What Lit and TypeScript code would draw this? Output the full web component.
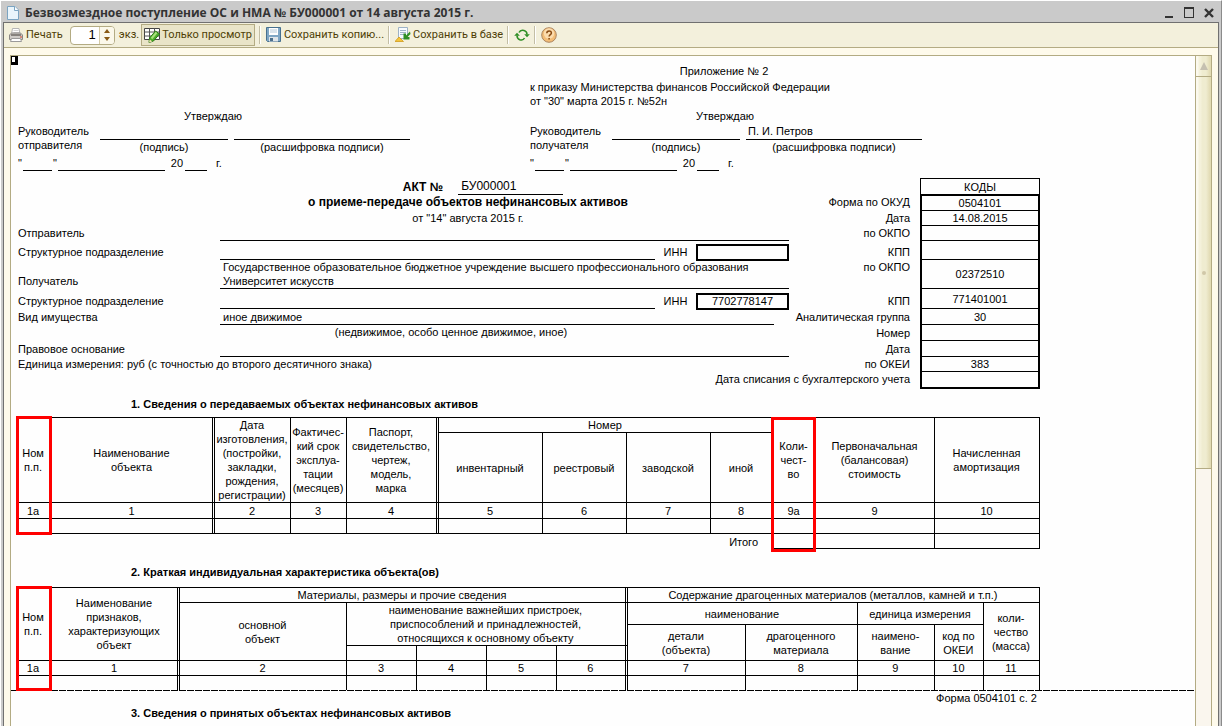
import { LitElement, html, css, svg, nothing } from "lit";
import { customElement, property } from "lit/decorators.js";
import { classMap } from "lit/directives/class-map.js";

type Cell = {
  text?: string;
  col?: number;
  row?: number;
  dbl?: boolean;
  mark?: "long" | "short" | "tall";
  bare?: boolean;
  right?: boolean;
};

const lines = (text: string) =>
  text.split("\n").map((part, i) => (i ? html`<br />${part}` : part));

const nums = (labels: string[], dbl: number[]): Cell[] =>
  labels.map((text, i) => ({ text, dbl: dbl.includes(i) }));

/* Bordered table of the printed form */
@customElement("form-table")
export class FormTable extends LitElement {
  @property({ attribute: false }) widths: number[] = [];
  @property({ attribute: false }) head: { h: number; cells: Cell[] }[] = [];
  @property({ attribute: false }) body: { h: number; cells: Cell[] }[] = [];
  @property() label = "";
  @property({ type: Boolean, reflect: true }) open = false;

  static styles = css`
    :host {
      display: block;
      margin-left: 2px;
    }
    table {
      width: 100%;
      table-layout: fixed;
      border-collapse: separate;
      border-spacing: 0;
      font-size: 11px;
      line-height: 14px;
      color: #000;
    }
    th,
    td {
      box-sizing: border-box;
      position: relative;
      padding: 0 1px 0 0;
      font-weight: normal;
      text-align: center;
      vertical-align: middle;
      white-space: nowrap;
      border: 0 solid #000;
      border-right-width: 1px;
      border-bottom-width: 1px;
    }
    .dbl {
      border-right: 3px double #000;
    }
    thead tr:first-child th {
      border-top-width: 1px;
    }
    .first {
      border-left-width: 1px;
      padding-right: 4px;
    }
    .bare {
      border-width: 0;
    }
    .right {
      text-align: right;
      padding-right: 15px;
    }
    :host([open]) tbody tr:last-child td {
      border-bottom-width: 0;
    }
    .mark {
      position: absolute;
      z-index: 1;
      top: -2px;
      left: -3px;
      right: -1px;
      height: 119px;
      box-sizing: border-box;
      border: 3px solid #f00;
      pointer-events: none;
    }
    .short {
      height: 105px;
    }
    .tall {
      top: -1px;
      left: -2px;
      height: 135px;
    }
  `;

  private cell(c: Cell, first: boolean, head: boolean) {
    const cls = classMap({
      dbl: !!c.dbl,
      bare: !!c.bare,
      right: !!c.right,
      first: first && !c.bare,
    });
    const inner = html`${lines(c.text ?? "")}${c.mark
      ? html`<span class="mark ${c.mark}"></span>`
      : nothing}`;
    return head
      ? html`<th class=${cls} colspan=${c.col ?? 1} rowspan=${c.row ?? 1}>${inner}</th>`
      : html`<td class=${cls} colspan=${c.col ?? 1}>${inner}</td>`;
  }

  render() {
    const total = this.widths.reduce((a, b) => a + b, 0);
    return html`<table aria-label=${this.label}>
      <colgroup>
        ${this.widths.map((w) => html`<col style="width:${(w / total) * 100}%" />`)}
      </colgroup>
      <thead>
        ${this.head.map(
          (r, ri) => html`<tr style="height:${r.h}px">
            ${r.cells.map((c, i) => this.cell(c, ri === 0 && i === 0, true))}
          </tr>`
        )}
      </thead>
      <tbody>
        ${this.body.map(
          (r) => html`<tr style="height:${r.h}px">
            ${r.cells.map((c, i) => this.cell(c, i === 0, false))}
          </tr>`
        )}
      </tbody>
    </table>`;
  }
}

/* Approval block with signature lines */
@customElement("approve-block")
export class ApproveBlock extends LitElement {
  @property() who = "";
  @property() name = "";

  static styles = css`
    :host {
      display: block;
      padding-left: 2px;
    }
    .title {
      width: 390px;
      text-align: center;
    }
    .sign {
      display: grid;
      grid-template-columns: 76px 128px 176px;
      column-gap: 6px;
      margin-top: 1px;
    }
    .field {
      height: 15px;
      padding-left: 2px;
      border-bottom: 1px solid #000;
    }
    .hint {
      text-align: center;
    }
    .date {
      display: flex;
      align-items: flex-end;
      height: 15px;
      margin-top: 2px;
    }
    .date span {
      height: 15px;
    }
    .rule {
      border-bottom: 1px solid #000;
      box-sizing: border-box;
    }
    .day {
      width: 29px;
      margin: 0 1px;
    }
    .month {
      width: 107px;
      margin: 0 6px 0 1px;
    }
    .year {
      width: 22px;
      margin: 0 9px 0 2px;
    }
  `;

  render() {
    return html`
      <div class="title">Утверждаю</div>
      <div class="sign">
        <div>Руководитель<br />${this.who}</div>
        <div>
          <div class="field"></div>
          <div class="hint">(подпись)</div>
        </div>
        <div>
          <div class="field">${this.name}</div>
          <div class="hint">(расшифровка подписи)</div>
        </div>
      </div>
      <div class="date">
        <span>"</span><span class="rule day"></span><span>"</span
        ><span class="rule month"></span><span>20</span
        ><span class="rule year"></span><span>г.</span>
      </div>
    `;
  }
}

const printIcon = svg`
  <path d="M4.500 1.500h6.500l1 5.500h-8.500z" fill="#fff" stroke="#b5b5b5"/>
  <path d="M5.500 3.500h5M5.500 5.500h5.500" stroke="#d5d5d5"/>
  <path d="M1.500 8l2-2h9l2 2v4.500h-13z" fill="#cfccc8" stroke="#8a8784"/>
  <path d="M3 8h10" stroke="#6e6a66" stroke-width="1.500"/>
  <path d="M3.500 11.500h9l1 3h-11z" fill="#fff" stroke="#9a9a9a"/>
  <path d="M12 10h2" stroke="#e0482e"/>`;
const gridIcon = svg`
  <path d="M.5 1.500h15v11h-15z" fill="#fff" stroke="#444"/>
  <path d="M.5 5h15M.5 9h15M5.500 1.500v11M10.500 1.500v11" stroke="#555" fill="none"/>
  <path d="M5.500 11L11.500 4l4 3-6 7-4.500 1.500z" fill="#4dae2c" stroke="#2c7a16"/>
  <path d="M7.500 11.500l5-6" stroke="#a8e07c" stroke-width="2"/>
  <path d="M5 15.500l.7-3 2.600 2z" fill="#f4e3b5"/>`;
const diskIcon = svg`
  <path d="M.5 .500h14v14h-13l-1-1z" fill="#7fa6c4" stroke="#47708f"/>
  <path d="M3 1h9v7H3z" fill="#fff"/>
  <path d="M4 3h7M4 5h7" stroke="#b4c8d8"/>
  <path d="M3 10h9v4.500H3z" fill="#dfe5ea"/>
  <path d="M4 11h3v3H4z" fill="#4c6f8b"/>`;
const baseIcon = svg`
  <path d="M3.500.5h9v11h-9z" fill="#f7fbff" stroke="#9db2c6"/>
  <path d="M5 3.500h6M5 5.500h6M5 7.500h4" stroke="#9fb4c8"/>
  <path d="M15 4.500L11 8.500V6.500H8.500v6H14.500v-2.500H12.500L15.500 7z" fill="#2f8f25"/>
  <path d="M0 14.500L4 10l4.500 4.500z" fill="#f5c63d" stroke="#cf9a1d" stroke-width=".8"/>`;
const refreshIcon = svg`
  <path d="M5 5.500C6 3.500 8 3 10 3.500 12 4 13 5.500 13 7.500" fill="none" stroke="#2f8f25" stroke-width="1.600"/>
  <path d="M10.500 11C9.500 13 7.500 13.300 5.800 12.700 4 12 3 10.500 3 8.500" fill="none" stroke="#2f8f25" stroke-width="1.600"/>
  <path d="M10.200 7.200h5.600l-2.800 3zM.2 8.800h5.600L3 5.800z" fill="#2f8f25"/>`;
const helpIcon = svg`
  <circle cx="8" cy="8" r="7.300" fill="#f3bd77" stroke="#ab8560"/>
  <circle cx="8" cy="6.500" r="5.200" fill="#fbdcae"/>
  <path d="M5.800 6.300c0-3.300 4.600-3 4.600-.4 0 1.700-2.300 1.600-2.300 3.600M8.100 11v1.600" fill="none" stroke="#8a4b12" stroke-width="1.500"/>`;

const icon = (body: unknown) =>
  html`<svg class="icon" viewBox="0 0 16 16" width="16" height="16" aria-hidden="true">${body}</svg>`;

type Row = {
  h: number;
  label?: string;
  low?: boolean;
  value?: unknown;
  side?: string;
  sideTop?: boolean;
  code: string;
};

@customElement("app-root")
export class AppRoot extends LitElement {
  static styles = css`
    :host {
      display: block;
      height: 100vh;
      overflow: hidden;
      background: #fff;
      font-family: "Liberation Sans", Arial, sans-serif;
    }
    .window {
      box-sizing: border-box;
      height: 100%;
      display: flex;
      flex-direction: column;
      margin: 0 0 0 1px;
      padding: 0 2px;
      border-top: 1px solid #fff;
      border-right: 1px solid #8b8b8b;
      background: #cacaca;
    }
    .caption {
      display: flex;
      align-items: center;
      height: 21px;
      flex: none;
      padding: 3px 0 0 4px;
      box-sizing: border-box;
      color: #333;
    }
    h1 {
      flex: 1;
      margin: 0 0 0 6px;
      font: bold 12px/16px "Open Sans", sans-serif;
      white-space: nowrap;
    }
    button {
      appearance: none;
      border: 0;
      background: none;
      padding: 0;
      margin: 0;
      color: inherit;
      font: inherit;
    }
    .ctl {
      width: 20px;
      height: 16px;
      display: grid;
      place-items: center;
    }
    .frame {
      flex: 1;
      min-height: 0;
      display: flex;
      flex-direction: column;
      border: 1px solid #707070;
      border-bottom: 0;
      background: #fefaeb;
    }
    .tools {
      display: flex;
      align-items: center;
      height: 24px;
      flex: none;
      padding-left: 4px;
      background: #f3f0dc;
      border-bottom: 1px solid #b3ab83;
      color: #4e3e05;
      font: 11px/14px Roboto, sans-serif;
      white-space: nowrap;
    }
    .tool {
      display: flex;
      align-items: center;
      gap: 2px;
      height: 22px;
    }
    .icon {
      display: block;
      flex: none;
    }
    .spin {
      display: flex;
      box-sizing: border-box;
      width: 45px;
      height: 19px;
      margin: 0 4px 0 7px;
      border: 1px solid #b3ab83;
      border-radius: 4px;
      background: #fff;
      overflow: hidden;
    }
    .spin input {
      flex: 1;
      width: 20px;
      min-width: 0;
      border: 0;
      padding: 0 3px 0 0;
      margin: 0;
      text-align: right;
      font: 13px/16px "Liberation Sans", sans-serif;
      color: #000;
      background: none;
      outline: 0;
    }
    .steps {
      display: flex;
      flex-direction: column;
      width: 14px;
      border-left: 1px solid #d3caa6;
      background: #fbf8ea;
    }
    .steps button {
      flex: 1;
      display: grid;
      place-items: center;
    }
    .pressed {
      box-sizing: border-box;
      height: 22px;
      padding: 0 2px;
      margin-left: 2px;
      border: 1px solid #b3ab83;
      background: #e9e4c8;
    }
    .sep {
      width: 1px;
      height: 18px;
      margin: 0 5px 0 4px;
      background: #c3bea5;
      border-right: 1px solid #fff;
    }
    .view {
      flex: 1;
      min-height: 0;
      display: flex;
      margin: 7px 6px 0;
      border: 1px solid #b3ab83;
      border-bottom: 0;
      background: #fefefe;
    }
    .paper {
      flex: 1;
      min-width: 0;
      overflow: hidden;
      position: relative;
      color: #000;
      font-size: 11px;
      line-height: 14px;
    }
    .cursor {
      position: absolute;
      top: 0;
      left: 0;
      width: 3px;
      height: 5px;
      border: solid #000;
      border-width: 1px 3px 3px 1px;
      background: #fff;
    }
    .sheet {
      max-width: 1024px;
      padding: 8px 0 0 5px;
      white-space: nowrap;
    }
    .halves {
      display: grid;
      grid-template-columns: 1fr 1fr;
    }
    .order {
      padding-left: 2px;
    }
    .order p {
      margin: 0;
    }
    .annex {
      width: 388px;
      text-align: center;
    }
    .order p + p {
      margin-top: 2px;
    }
    .approvals {
      margin-top: 1px;
    }
    .requisites {
      margin-top: 7px;
    }
    .row {
      display: grid;
      grid-template-columns: minmax(0, 204fr) minmax(0, 569fr) minmax(0, 131fr) minmax(0, 120fr);
    }
    .label {
      padding: 0 0 1px 2px;
      align-self: center;
    }
    .side {
      display: flex;
      justify-content: flex-end;
      align-self: center;
      padding: 0 10px 1px 0;
    }
    .low {
      align-self: end;
    }
    .high {
      align-self: start;
    }
    .code {
      display: grid;
      place-items: center;
      border: solid #000;
      border-width: 0 2px 1px;
    }
    .row:first-child .code {
      border-width: 1px 1px 0;
    }
    .row:nth-child(2) .code {
      border-top-width: 2px;
    }
    .row:last-child .code {
      border-bottom-width: 2px;
    }
    .line {
      box-sizing: border-box;
      height: 100%;
      padding-left: 3px;
      border-bottom: 1px solid #000;
      display: flex;
      align-items: center;
    }
    .short {
      margin-right: 15px;
    }
    .unit {
      display: grid;
      grid-template-columns: 435fr 41fr 93fr;
      align-items: end;
      height: 100%;
    }
    .inn {
      text-align: center;
      padding-bottom: 1px;
    }
    .box {
      position: relative;
      top: 1px;
      box-sizing: border-box;
      height: 17px;
      border: 2px solid #000;
      line-height: 13px;
      text-align: center;
    }
    .head {
      display: flex;
      align-items: flex-end;
      justify-content: center;
      gap: 15px;
      height: 17px;
      margin-right: 43px;
      font-size: 12px;
      line-height: 16px;
    }
    .number {
      width: 102px;
      height: 16px;
      padding-left: 3px;
      border-bottom: 1px solid #000;
    }
    .mid {
      margin-right: 73px;
      text-align: center;
    }
    .name {
      padding-top: 1px;
      font-size: 12px;
    }
    .kind {
      margin-right: 107px;
    }
    h2 {
      margin: 0;
      padding-left: 115px;
      font-size: 11px;
      line-height: 14px;
    }
    .sec1 {
      padding-top: 8px;
      padding-bottom: 6px;
    }
    .sec2 {
      padding-top: 16px;
      padding-bottom: 8px;
    }
    .cut {
      height: 1px;
      background: repeating-linear-gradient(90deg, #000 0 7px, #fff 7px 8px);
    }
    .after {
      padding-top: 0;
    }
    .formno {
      margin: 0 3px 1px 0;
      text-align: right;
    }
    .scroll {
      display: flex;
      flex-direction: column;
      width: 15px;
      flex: none;
      border-left: 1px solid #b3ab83;
      background: #faf6ee;
    }
    .up,
    .thumb {
      background: linear-gradient(90deg, #fbf9ee 0 2px, #f4f1da 3px 5px, #efecd0 6px 10px, #e2dbb4 14px);
      border-bottom: 1px solid #b3ab83;
      display: grid;
      place-items: center;
    }
    .up {
      height: 21px;
    }
    .thumb {
      height: 391px;
    }
    .grip {
      width: 4px;
      height: 4px;
      border-radius: 50%;
      background: #d0c8a8;
    }
  `;

  private rows: Row[] = [
    {
      h: 16,
      value: html`<div class="head"><b>АКТ №</b><span class="number">БУ000001</span></div>`,
      code: "КОДЫ",
    },
    {
      h: 17,
      value: html`<div class="mid name"><b>о приеме-передаче объектов нефинансовых активов</b></div>`,
      side: "Форма по ОКУД",
      code: "0504101",
    },
    {
      h: 15,
      value: html`<div class="mid">от "14" августа 2015 г.</div>`,
      side: "Дата",
      code: "14.08.2015",
    },
    { h: 15, label: "Отправитель", value: html`<div class="line"></div>`, side: "по ОКПО", code: "" },
    { h: 19, label: "Структурное подразделение", low: true, value: this.unit(""), side: "КПП", code: "" },
    {
      h: 29,
      label: "Получатель",
      low: true,
      value: html`<div class="line">
        Государственное образовательное бюджетное учреждение высшего профессионального образования<br />Университет искусств
      </div>`,
      side: "по ОКПО",
      sideTop: true,
      code: "02372510",
    },
    { h: 20, label: "Структурное подразделение", low: true, value: this.unit("7702778147"), side: "КПП", code: "771401001" },
    {
      h: 16,
      label: "Вид имущества",
      value: html`<div class="line short">иное движимое</div>`,
      side: "Аналитическая группа",
      code: "30",
    },
    {
      h: 16,
      value: html`<div class="mid kind">(недвижимое, особо ценное движимое, иное)</div>`,
      side: "Номер",
      code: "",
    },
    { h: 16, label: "Правовое основание", value: html`<div class="line"></div>`, side: "Дата", code: "" },
    {
      h: 15,
      label: "Единица измерения: руб (с точностью до второго десятичного знака)",
      side: "по ОКЕИ",
      code: "383",
    },
    { h: 17, side: "Дата списания с бухгалтерского учета", sideTop: true, code: "" },
  ];

  private unit(inn: string) {
    return html`<div class="unit">
      <div class="line"></div>
      <div class="inn">ИНН</div>
      <div class="box">${inn}</div>
    </div>`;
  }

  private row(r: Row) {
    return html`<div class="row" style="height:${r.h}px">
      <div class=${classMap({ label: true, low: !!r.low })}>${r.label ?? ""}</div>
      <div>${r.value ?? ""}</div>
      <div class=${classMap({ side: true, low: !!r.low && !r.sideTop, high: !!r.sideTop })}>${r.side ?? ""}</div>
      <div class="code">${r.code}</div>
    </div>`;
  }

  private blank(n: number, dbl: number[]): Cell[] {
    return nums(Array(n).fill(""), dbl);
  }

  render() {
    return html`
      <div class="window">
        <header class="caption">
          <svg width="12" height="14" viewBox="0 0 12 14" aria-hidden="true">
            <path d="M.5.5h7.500l3.500 3.500v9.500H.5z" fill="#eaf5fc" stroke="#7ba4c2" />
            <path d="M7.500.5v4h4" fill="#fff" stroke="#7ba4c2" />
          </svg>
          <h1>Безвозмездное поступление ОС и НМА № БУ000001 от 14 августа 2015 г.</h1>
          <button class="ctl" aria-label="Свернуть">
            <svg width="12" height="12" viewBox="0 0 12 12"><path d="M2 9h8v2H2z" fill="#333" /></svg>
          </button>
          <button class="ctl" aria-label="Развернуть">
            <svg width="12" height="12" viewBox="0 0 12 12">
              <path d="M1.500 1v10M10.500 1v10M1 10.500h10" stroke="#333" />
              <path d="M1 0h10v2H1z" fill="#333" />
            </svg>
          </button>
          <button class="ctl" aria-label="Закрыть">
            <svg width="12" height="12" viewBox="0 0 12 12">
              <path d="M2 2l8 8M10 2l-8 8" stroke="#333" stroke-width="2.400" />
            </svg>
          </button>
        </header>
        <div class="frame">
          <div class="tools" role="toolbar">
            <button class="tool">${icon(printIcon)}Печать</button>
            <div class="spin">
              <input id="copies" type="text" value="1" />
              <div class="steps">
                <button aria-label="Больше">
                  <svg width="6" height="4" viewBox="0 0 6 4"><path d="M0 4L3 0l3 4z" fill="#8a5a14" /></svg>
                </button>
                <button aria-label="Меньше">
                  <svg width="6" height="4" viewBox="0 0 6 4"><path d="M0 0l3 4 3-4z" fill="#8a5a14" /></svg>
                </button>
              </div>
            </div>
            <label for="copies">экз.</label>
            <button class="tool pressed" aria-pressed="true">${icon(gridIcon)}Только просмотр</button>
            <span class="sep"></span>
            <button class="tool">${icon(diskIcon)}Сохранить копию...</button>
            <span class="sep"></span>
            <button class="tool">${icon(baseIcon)}Сохранить в базе</button>
            <span class="sep"></span>
            <button class="tool" aria-label="Обновить">${icon(refreshIcon)}</button>
            <span class="sep"></span>
            <button class="tool" aria-label="Справка">${icon(helpIcon)}</button>
          </div>
          <div class="view">
            <main class="paper">
              <div class="cursor"></div>
              <div class="sheet">
                <div class="halves">
                  <div></div>
                  <div class="order">
                    <p class="annex">Приложение № 2</p>
                    <p>
                      к приказу Министерства финансов Российской Федерации<br />от "30" марта 2015 г. №52н
                    </p>
                  </div>
                </div>
                <div class="halves approvals">
                  <approve-block who="отправителя"></approve-block>
                  <approve-block who="получателя" name="П. И. Петров"></approve-block>
                </div>
                <div class="requisites">${this.rows.map((r) => this.row(r))}</div>
                <h2 class="sec1">1. Сведения о передаваемых объектах нефинансовых активов</h2>
                <form-table
                  label="Сведения о передаваемых объектах"
                  .widths=${[34, 163, 76, 56, 92, 104, 84, 84, 62, 43, 119, 105]}
                  .head=${[
                    {
                      h: 16,
                      cells: [
                        { text: "Ном\nп.п.", row: 2, mark: "long" },
                        { text: "Наименование\nобъекта", row: 2, dbl: true },
                        { text: "Дата\nизготовления,\n(постройки,\nзакладки,\nрождения,\nрегистрации)", row: 2 },
                        { text: "Фактичес-\nкий срок\nэксплуа-\nтации\n(месяцев)", row: 2 },
                        { text: "Паспорт,\nсвидетельство,\nчертеж,\nмодель,\nмарка", row: 2, dbl: true },
                        { text: "Номер", col: 4 },
                        { text: "Коли-\nчест-\nво", row: 2, mark: "tall" },
                        { text: "Первоначальная\n(балансовая)\nстоимость", row: 2 },
                        { text: "Начисленная\nамортизация", row: 2 },
                      ],
                    },
                    {
                      h: 70,
                      cells: [
                        { text: "инвентарный" },
                        { text: "реестровый" },
                        { text: "заводской" },
                        { text: "иной" },
                      ],
                    },
                  ]}
                  .body=${[
                    { h: 16, cells: nums(["1а", "1", "2", "3", "4", "5", "6", "7", "8", "9а", "9", "10"], [1, 4]) },
                    { h: 15, cells: this.blank(12, [1, 4]) },
                    {
                      h: 15,
                      cells: [{ text: "Итого", col: 9, bare: true, right: true }, {}, {}, {}],
                    },
                  ]}
                ></form-table>
                <h2 class="sec2">2. Краткая индивидуальная характеристика объекта(ов)</h2>
                <form-table
                  open
                  label="Краткая индивидуальная характеристика"
                  .widths=${[34, 128, 167, 70, 70, 70, 71, 118, 112, 77, 49, 56]}
                  .head=${[
                    {
                      h: 16,
                      cells: [
                        { text: "Ном\nп.п.", row: 4, mark: "short" },
                        { text: "Наименование\nпризнаков,\nхарактеризующих\nобъект", row: 4, dbl: true },
                        { text: "Материалы, размеры и прочие сведения", col: 5, dbl: true },
                        { text: "Содержание драгоценных материалов (металлов, камней и т.п.)", col: 5 },
                      ],
                    },
                    {
                      h: 22,
                      cells: [
                        { text: "основной\nобъект", row: 3 },
                        {
                          text: "наименование важнейших пристроек,\nприспособлений и принадлежностей,\nотносящихся к основному объекту",
                          col: 4,
                          row: 2,
                          dbl: true,
                        },
                        { text: "наименование", col: 2 },
                        { text: "единица измерения", col: 2 },
                        { text: "коли-\nчество\n(масса)", row: 3 },
                      ],
                    },
                    {
                      h: 21,
                      cells: [
                        { text: "детали\n(объекта)", row: 2 },
                        { text: "драгоценного\nматериала", row: 2 },
                        { text: "наимено-\nвание", row: 2 },
                        { text: "код по\nОКЕИ", row: 2 },
                      ],
                    },
                    { h: 15, cells: [{}, {}, {}, { dbl: true }] },
                  ]}
                  .body=${[
                    { h: 15, cells: nums(["1а", "1", "2", "3", "4", "5", "6", "7", "8", "9", "10", "11"], [1, 6]) },
                    { h: 14, cells: this.blank(12, [1, 6]) },
                  ]}
                ></form-table>
              </div>
              <div class="cut"></div>
              <div class="sheet after">
                <p class="formno">Форма 0504101 с. 2</p>
                <h2>3. Сведения о принятых объектах нефинансовых активов</h2>
              </div>
            </main>
            <div class="scroll">
              <button class="up" aria-label="Вверх">
                <svg width="8" height="8" viewBox="0 0 8 8"><path d="M0 8l4-8 4 8z" fill="#c5c0b0" /></svg>
              </button>
              <div class="thumb"><span class="grip"></span></div>
            </div>
          </div>
        </div>
      </div>
    `;
  }
}
